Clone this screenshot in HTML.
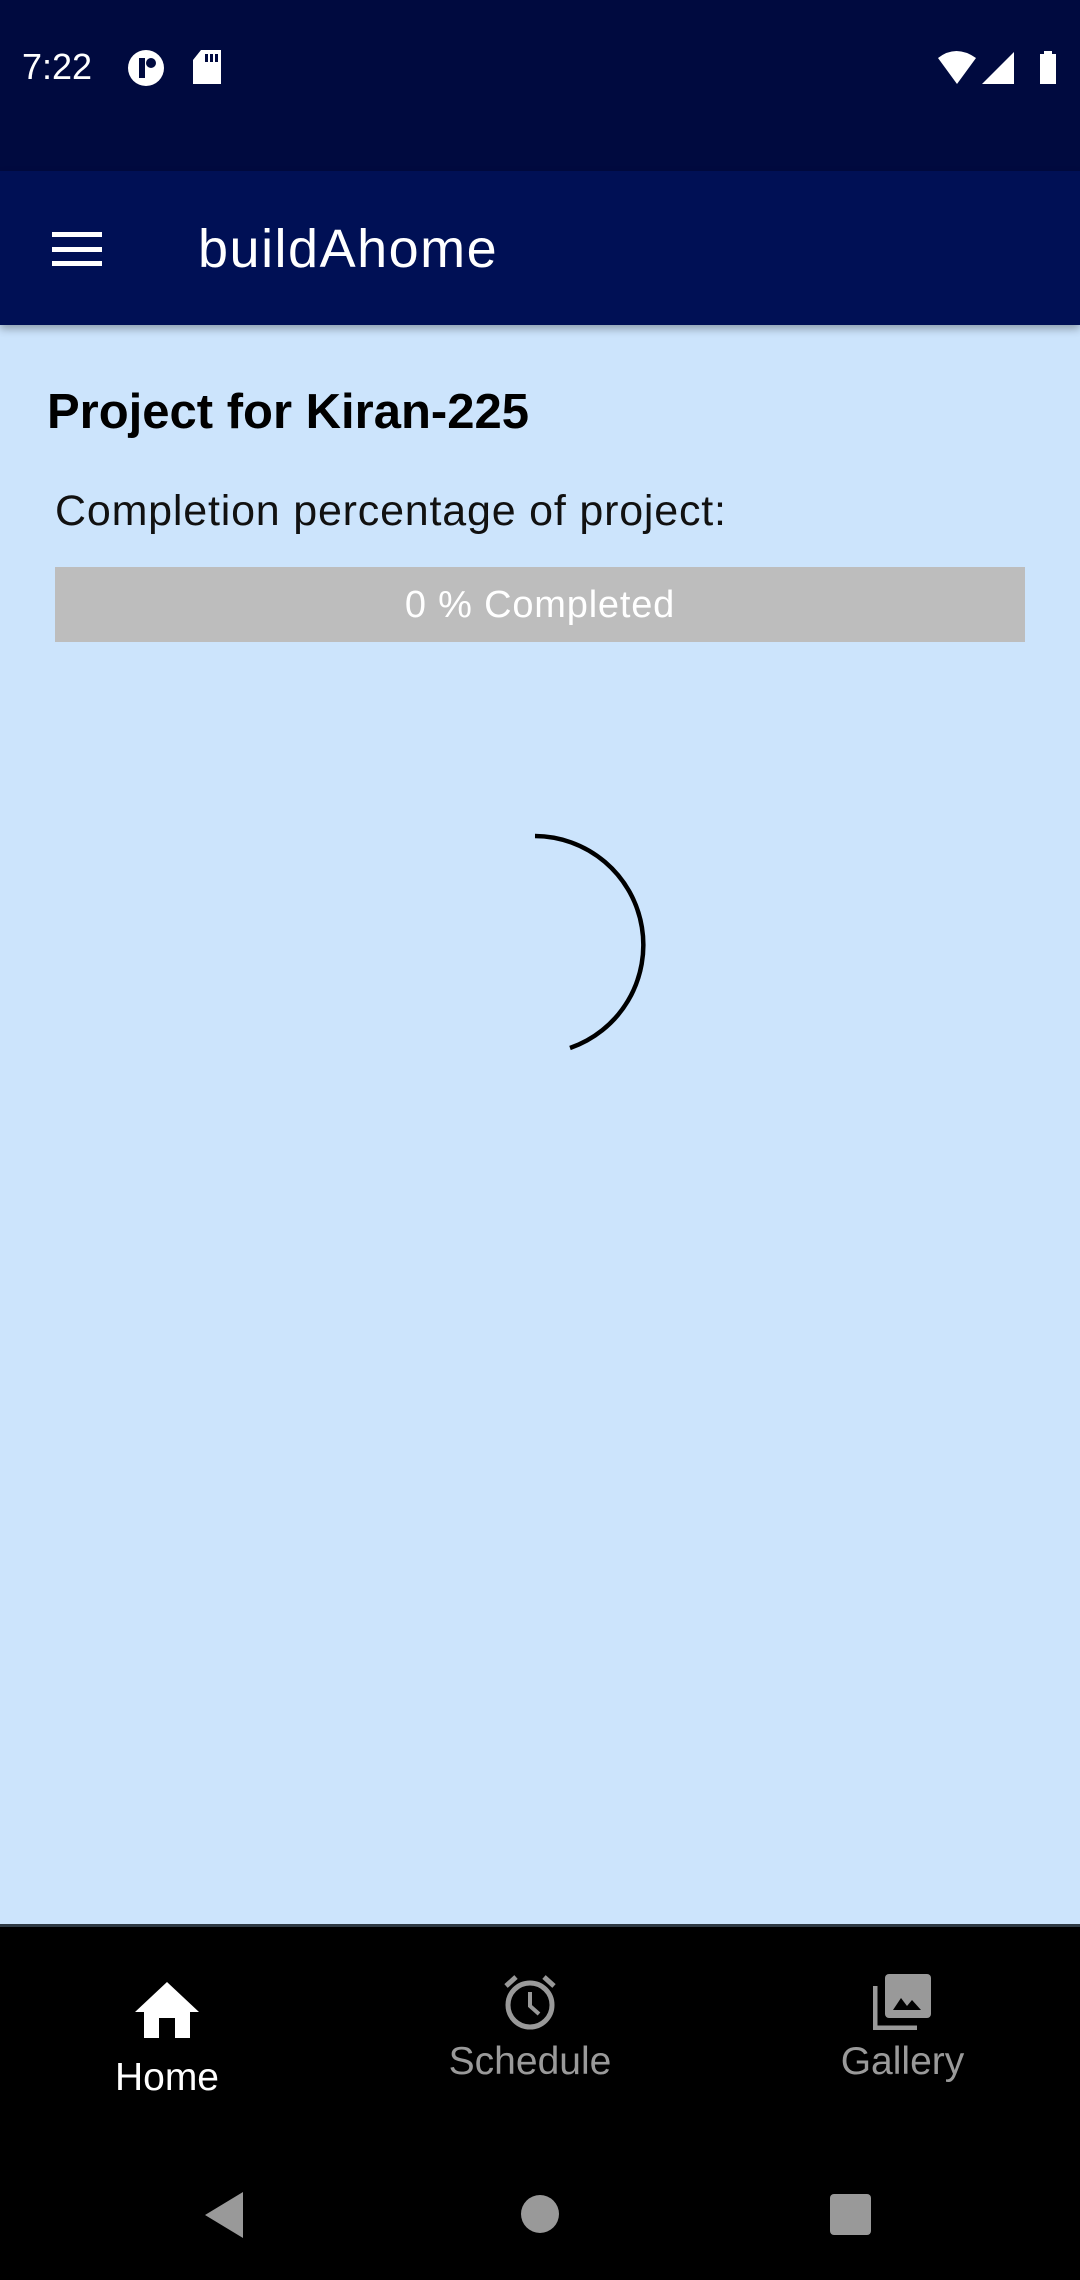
<!DOCTYPE html>
<html><head><meta charset="utf-8"><style>
*{margin:0;padding:0;box-sizing:border-box}
body{width:1080px;height:2280px;position:relative;background:#cce4fc;font-family:"Liberation Sans",sans-serif;overflow:hidden}
.abs{position:absolute}
</style></head><body>
<div class="abs" style="left:0;top:0;width:1080px;height:171px;background:#000a3f"></div>
<div class="abs" style="left:22px;top:46px;color:#fff;font-size:36px;">7:22</div>
<svg class="abs" style="left:126px;top:48px" width="40" height="40" viewBox="0 0 40 40"><circle cx="20" cy="20" r="18" fill="#fff"/><path d="M13 10h6v20h-6z" fill="#000a3f"/><circle cx="25" cy="15" r="5" fill="#000a3f"/></svg>
<svg class="abs" style="left:193px;top:50px" width="30" height="36" viewBox="0 0 30 36"><path d="M8 0h20v34H0V10z" fill="#fff"/><path d="M12 4h3v8h-3zM17 4h3v8h-3zM22 4h3v8h-3z" fill="#000a3f"/></svg>
<svg class="abs" style="left:938px;top:50px" width="122" height="36" viewBox="0 0 122 36"><path d="M0 8Q18 -6 38 8L19 34z" fill="#fff"/><path d="M44 34L76 2V34z" fill="#fff"/><path d="M102 4h4v-3h8v3h4v30h-16z" fill="#fff"/></svg>
<div class="abs" style="left:0;top:171px;width:1080px;height:154px;background:#001055;box-shadow:0 4px 8px rgba(0,0,0,.3)"></div>
<div class="abs" style="left:52px;top:232px;width:50px;height:5px;background:#fff"></div>
<div class="abs" style="left:52px;top:247px;width:50px;height:5px;background:#fff"></div>
<div class="abs" style="left:52px;top:261px;width:50px;height:5px;background:#fff"></div>
<div class="abs" style="left:198px;top:218px;color:#fff;font-size:54px;letter-spacing:1.5px">buildAhome</div>
<div class="abs" style="left:47px;top:384px;color:#000;font-size:49px;font-weight:bold;letter-spacing:0">Project for Kiran-225</div>
<div class="abs" style="left:55px;top:487px;color:#111;font-size:43px;letter-spacing:0.8px">Completion percentage of project:</div>
<div class="abs" style="left:55px;top:567px;width:970px;height:75px;background:#bdbdbd;color:#fff;font-size:38px;letter-spacing:0.8px;text-align:center;line-height:77px">0 % Completed</div>
<svg class="abs" style="left:420px;top:830px" width="230" height="230" viewBox="0 0 230 230"><path d="M115 6A109 109 0 0 1 150 218" fill="none" stroke="#000" stroke-width="4.5"/></svg>
<div class="abs" style="left:0;top:1924px;width:1080px;height:356px;background:#000;border-top:3px solid #2f3a44"></div>
<svg class="abs" style="left:135px;top:1982px" width="64" height="56" viewBox="0 0 64 56"><path d="M32 0L64 30H55V56H40V36H24V56H9V30H0z" fill="#fff"/></svg>
<div class="abs" style="left:0;top:2056px;width:334px;text-align:center;color:#fff;font-size:39px">Home</div>
<svg class="abs" style="left:502px;top:1974px" width="56" height="56" viewBox="0 0 56 56"><circle cx="28" cy="31" r="22" fill="none" stroke="#999" stroke-width="5"/><path d="M28 18v14l9 8" fill="none" stroke="#999" stroke-width="4"/><path d="M4 12L14 3M52 12L42 3" stroke="#999" stroke-width="5"/></svg>
<div class="abs" style="left:380px;top:2040px;width:300px;text-align:center;color:#9a9a9a;font-size:39px">Schedule</div>
<svg class="abs" style="left:873px;top:1974px" width="58" height="56" viewBox="0 0 58 56"><rect x="12" y="0" width="46" height="44" rx="4" fill="#999"/><path d="M20 36l8-12 6 8 5-6 9 10z" fill="#000"/><path d="M2 12V54H44" fill="none" stroke="#999" stroke-width="5"/></svg>
<div class="abs" style="left:760px;top:2040px;width:285px;text-align:center;color:#9a9a9a;font-size:39px">Gallery</div>
<svg class="abs" style="left:205px;top:2192px" width="40" height="46" viewBox="0 0 40 46"><path d="M38 0V46L0 23z" fill="#999"/></svg>
<div class="abs" style="left:521px;top:2195px;width:38px;height:38px;border-radius:50%;background:#999"></div>
<div class="abs" style="left:830px;top:2194px;width:41px;height:41px;border-radius:4px;background:#999"></div>
</body></html>
